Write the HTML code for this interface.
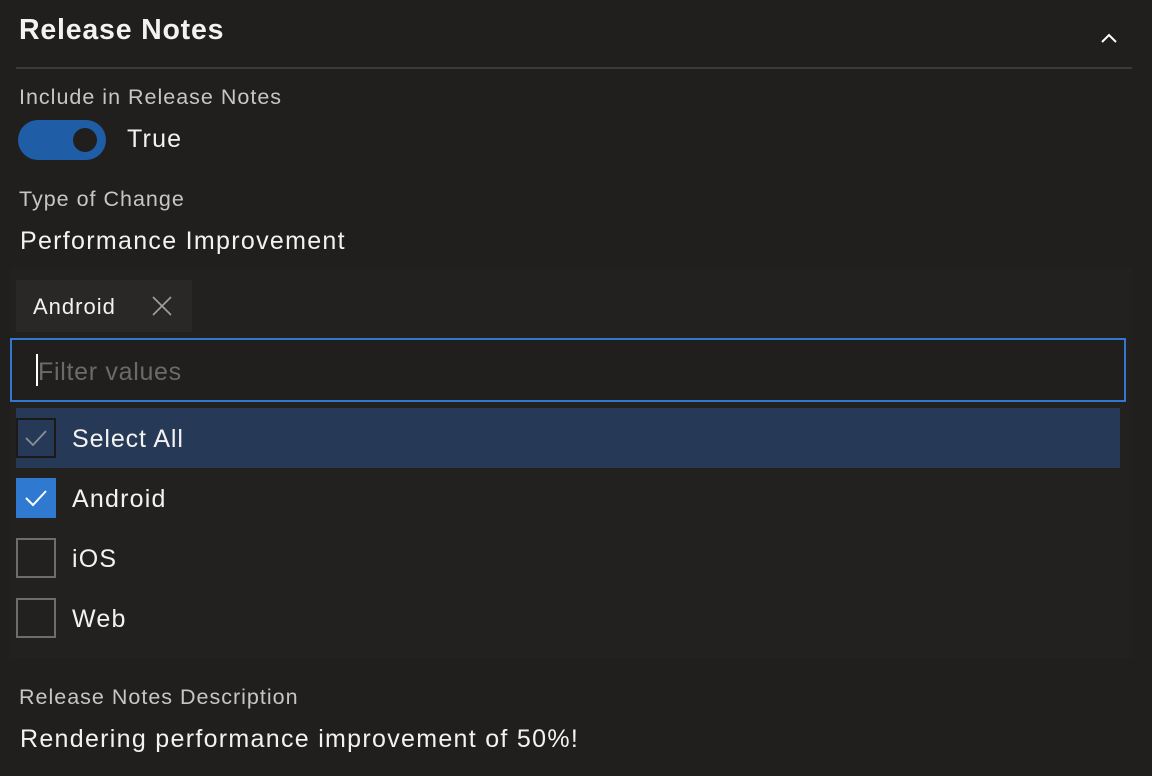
<!DOCTYPE html>
<html><head><meta charset="utf-8"><style>
*{margin:0;padding:0;box-sizing:border-box}
body{width:1152px;height:776px;background:#201f1e;font-family:"Liberation Sans",sans-serif;color:#f3f2f1;position:relative;overflow:hidden}
.a{position:absolute;white-space:nowrap}
.lbl{color:#c8c6c4;font-size:21.5px;letter-spacing:1px}
.t{font-size:25px;letter-spacing:1.2px}
.cb{position:absolute;left:16px;width:40px;height:40px;border:2px solid #6e6d6c}
</style></head><body>
<div class="a" style="left:19px;top:14px;font-size:28.5px;font-weight:bold;color:#f3f2f1;letter-spacing:0.8px">Release Notes</div>
<svg class="a" style="left:1100px;top:33px" width="18" height="12" viewBox="0 0 18 12"><path d="M2 9 L9 2 L16 9" fill="none" stroke="#fff" stroke-width="2"/></svg>
<div class="a" style="left:16px;top:67px;width:1116px;height:2px;background:#3b3a39"></div>
<div class="a lbl" style="left:19px;top:85px">Include in Release Notes</div>
<div class="a" style="left:18px;top:120px;width:88px;height:40px;border-radius:20px;background:#1f5ea6"></div>
<div class="a" style="left:73px;top:128px;width:24px;height:24px;border-radius:12px;background:#201f1e"></div>
<div class="a t" style="left:127px;top:125px">True</div>
<div class="a lbl" style="left:19px;top:187px">Type of Change</div>
<div class="a t" style="left:20px;top:227px;letter-spacing:1.3px">Performance Improvement</div>
<div class="a" style="left:10px;top:268px;width:1122px;height:390px;background:#222120"></div>
<div class="a" style="left:16px;top:280px;width:176px;height:52px;background:#292827"></div>
<div class="a" style="left:33px;top:294px;font-size:22px;letter-spacing:1px">Android</div>
<svg class="a" style="left:152px;top:296px" width="20" height="20" viewBox="0 0 20 20"><path d="M1 1L19 19M19 1L1 19" stroke="#a19f9d" stroke-width="1.6"/></svg>
<div class="a" style="left:10px;top:338px;width:1116px;height:64px;border:2px solid #2f7ad0;background:#201f1e"></div>
<div class="a" style="left:36px;top:354px;width:2px;height:32px;background:#fff"></div>
<div class="a" style="left:38px;top:358px;font-size:25px;color:#6b6a69;letter-spacing:0.7px">Filter values</div>
<div class="a" style="left:16px;top:408px;width:1104px;height:60px;background:#263a58"></div>
<div class="cb" style="top:418px;border-color:#1b1a19;background:#263a58"></div>
<svg class="a" style="left:24px;top:428px" width="24" height="20" viewBox="0 0 24 20"><path d="M2 10L9 17L22 3" fill="none" stroke="#8a8f98" stroke-width="1.8"/></svg>
<div class="a t" style="left:72px;top:425px;letter-spacing:0.9px">Select All</div>
<div class="cb" style="top:478px;border:none;background:#2f7ad0"></div>
<svg class="a" style="left:24px;top:488px" width="24" height="20" viewBox="0 0 24 20"><path d="M2 10L9 17L22 3" fill="none" stroke="#fff" stroke-width="2"/></svg>
<div class="a t" style="left:72px;top:485px">Android</div>
<div class="cb" style="top:538px"></div>
<div class="a t" style="left:72px;top:545px">iOS</div>
<div class="cb" style="top:598px"></div>
<div class="a t" style="left:72px;top:605px">Web</div>
<div class="a lbl" style="left:19px;top:685px">Release Notes Description</div>
<div class="a t" style="left:20px;top:725px;letter-spacing:1.3px">Rendering performance improvement of 50%!</div>
</body></html>
